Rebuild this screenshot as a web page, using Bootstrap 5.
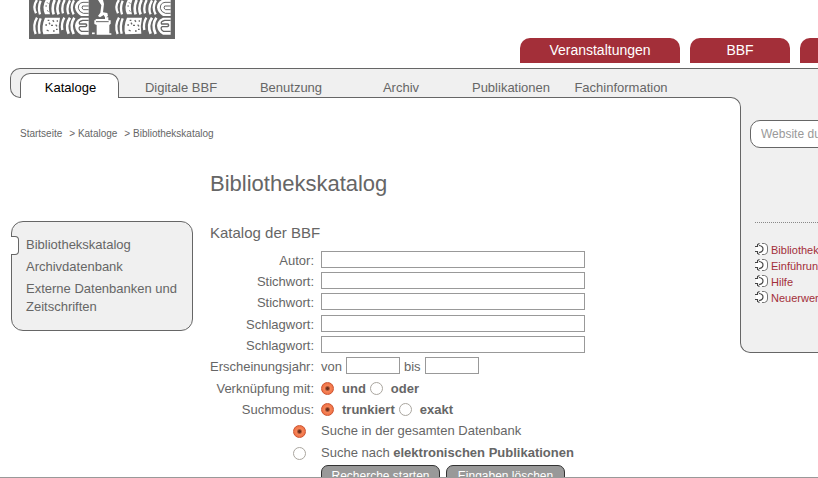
<!DOCTYPE html>
<html lang="de">
<head>
<meta charset="utf-8">
<meta name="viewport" content="width=device-width, initial-scale=1">
<title>Bibliothekskatalog</title>
<link href="https://cdn.jsdelivr.net/npm/bootstrap@5.3.0/dist/css/bootstrap.min.css" rel="stylesheet">
<style>
:root { --ink: #666; --panel: #f0f0f0; --red: #a32f39; }
body { font: 13px/18px "Liberation Sans", Arial, sans-serif; color: var(--ink); background: #fff; }
a { color: inherit; text-decoration: none; }
.page { border-bottom: 1px solid #999; }
.site-head { height: 68px; padding-left: 29px; }
.site-logo { width: 146px; height: 39px; }
.top-tabs { margin-left: 345px; gap: 10px; height: 25px; margin-top: 38px; }
.top-tab { background: var(--red); color: #fff; border-radius: 10px 10px 0 0; width: 100px; font-size: 14px; line-height: 24px; }
.top-tab.wide { width: 160px; }
.main-nav { height: 30px; margin-left: 10px; padding-left: 9px; gap: 10px; background: var(--panel); border: 1px solid var(--ink); border-right: 0; border-radius: 10px 0 0 10px; }
.nav-tab { width: 100px; height: 24px; padding: 5px 0 0 2px; margin-top: 4px; border: 1px solid transparent; border-bottom: 0; }
.nav-tab.current { width: 99px; height: 25px; margin-right: 1px; color: #000; background: #fff; border-color: var(--ink); border-radius: 10px 10px 0 0; z-index: 2; }
.cap { margin: -1px 0 0 20px; padding-right: 77px; background: var(--panel); }
.cap-edge { height: 13px; background: #fff; border: solid var(--ink); border-width: 1px 1px 0 0; border-radius: 0 10px 0 0; }
.crumbs { padding: 15px 0 0 20px; font-size: 10px; gap: 7px; }
.side-nav { width: 182px; margin: 78px 17px 0 11px; padding: 14px; gap: 4px; background: var(--panel); border: 1px solid var(--ink); border-radius: 12px; }
.notch { left: -1px; top: 14px; width: 8px; height: 19px; background: #fff; border: 1px solid var(--ink); border-left: 0; border-radius: 0 4px 4px 0; }
h1 { font-size: 22px; line-height: 26px; margin: 28px 0 0; }
h2 { font-size: 15px; line-height: 18px; margin: 27px 0 7px; }
.search-form { width: 375px; row-gap: 1px; }
.line { height: 21px; }
.line-name { width: 104px; margin-right: 7px; }
.line label, .line .line-name { padding-top: 2px; }
.field { height: 17px; padding: 0 3px; border: 1px solid #999; border-radius: 0; background: #fff; min-width: 0; }
.field.year { width: 54px; }
.dot { appearance: none; width: 13px; height: 13px; margin: 2px 0 0; flex: none; border: 1px solid #aaa69f; border-radius: 50%; background: #fff; }
.dot:checked { border-color: #cc5430; background: radial-gradient(circle, #6c2e1b 0 1px, #f68558 3px, #f2764a 5px); }
.action { min-width: 119px; height: 22px; padding: 0 8px; border: 1px solid #333; border-radius: 7px; background: #999; color: #fff; font-size: 12px; line-height: 18px; }
.actions { padding-top: 3px; gap: 6px; }
.actions .line-name { margin-right: 1px; }
.side-panel { width: 78px; height: 243px; padding: 10px 0 0 9px; background: var(--panel); border: solid var(--ink); border-width: 0 0 1px 1px; border-radius: 0 0 0 10px; }
.site-search { width: 160px; height: 28px; padding: 0 10px; border: 1px solid var(--ink); border-radius: 10px; background: #fff; font-size: 12px; }
.site-search::placeholder { color: #999; opacity: 1; }
.quick-links { margin: 74px 0 0 5px; padding-top: 19px; border-top: 1px dotted #888; color: var(--red); font-size: 11px; line-height: 16px; }
.quick-links svg { width: 13px; height: 12px; margin: 0 3px 2px 0; flex: none; }
</style>
<script src="https://cdn.jsdelivr.net/npm/bootstrap@5.3.0/dist/js/bootstrap.bundle.min.js"></script>
</head>
<body>
<svg class="d-none" aria-hidden="true">
  <symbol id="piece" viewBox="0 0 13 12">
    <path d="M1 1H9Q12.500 1 12.500 5V8Q12.500 11.500 9 11.500H1Z" fill="#fff"/>
    <path d="M7 .5H9.500Q12.500 1 12.500 4V8Q12.500 11 9.500 11.500H7" fill="none" stroke="#777"/>
    <path d="M0 3.500H2.500V1.500L4.500 .5M0 8.500H2.500V10.500L4.500 11.500M4 2.500Q8 3 8 6T4 9.500" fill="none" stroke="#444" stroke-width="1.200"/>
  </symbol>
</svg>
<div class="page vh-100 overflow-hidden">
  <header class="site-head d-flex">
    <svg class="site-logo flex-shrink-0" viewBox="28 0 438 117" role="img" aria-label="BBF">
      <defs>
        <g id="volumes" fill="none" stroke="#fff">
          <path d="M52 53Q38 76 48 102M63 55Q54 77 60 101" stroke-width="7"/>
          <path d="M76 53H121Q115 77 119 101L71 103Q64 80 76 53Z" fill="#fff" stroke="none"/>
          <path d="M84 61h5M99 61l4 4M111 63h4M77 75h5M94 76h6M108 74l4 5M81 90l6 3M100 93h5M88 68l3 5M109 88h5" stroke="#666" stroke-width="4"/>
          <path d="M134 53Q124 70 128 90" stroke-width="7"/>
          <path d="M151 53Q136 75 147 101M164 53Q149 75 162 102" stroke-width="8"/>
          <path d="M207 53H184Q167 60 166 77Q168 96 184 104H207Z" fill="#fff" stroke="none"/>
          <path d="M207 61H189Q175 65 180 72H199Q204 77 197 80H181Q174 86 185 94H207" stroke="#666" stroke-width="4"/>
        </g>
        <g id="volumes-top" fill="none" stroke="#fff">
          <path d="M52 0Q38 18 49 40M63 2Q54 22 61 43" stroke-width="7"/>
          <path d="M78 0H92Q84 21 91 43H76Q66 20 78 0Z" fill="#fff" stroke="none"/>
          <path d="M82 7l4 4M77 18h5M83 31l3 4" stroke="#666" stroke-width="3"/>
          <path d="M105 0Q95 22 102 43M120 0Q108 24 117 43" stroke-width="8"/>
          <path d="M135 0Q124 20 130 40M151 1Q138 24 147 43M163 1Q150 22 162 43" stroke-width="7"/>
          <path d="M207 0H180Q166 8 166 22Q168 39 184 48H207Z" fill="#fff" stroke="none"/>
          <path d="M207 7H190Q175 9 176 25Q178 36 191 40H207M207 18H189Q184 24 191 29H207" stroke="#666" stroke-width="3"/>
        </g>
      </defs>
      <path d="M28 0h438v117H28z" fill="#666"/>
      <use href="#volumes"/><use href="#volumes" x="246"/>
      <use href="#volumes-top"/><use href="#volumes-top" x="246"/>
      <path d="M235 0h15l3 12-3 25 13 2 2 9-8 5-5-8-11 7-6-4 7-10 3-22ZM228 57h28v-5h10v9h7v10l-4 4v25h6v4h-44V75l-7-3V61h4Z" fill="#fff"/>
      <path d="M229 65h38" stroke="#666" stroke-width="3"/>
      <path d="M217 100h8" stroke="#fff" stroke-width="5"/>
    </svg>
    <nav class="top-tabs d-flex flex-shrink-0 text-center" aria-label="Bereiche">
      <a href="#" class="top-tab wide">Veranstaltungen</a>
      <a href="#" class="top-tab">BBF</a>
      <a href="#" class="top-tab" aria-label="Weitere"></a>
    </nav>
  </header>

  <nav class="main-nav d-flex text-center" aria-label="Hauptnavigation">
    <a href="#" class="nav-tab current position-relative" aria-current="page">Kataloge</a>
    <a href="#" class="nav-tab">Digitale BBF</a>
    <a href="#" class="nav-tab">Benutzung</a>
    <a href="#" class="nav-tab">Archiv</a>
    <a href="#" class="nav-tab">Publikationen</a>
    <a href="#" class="nav-tab">Fachinformation</a>
  </nav>
  <div class="cap"><div class="cap-edge"></div></div>

  <div class="d-flex align-items-start">
    <div class="flex-grow-1">
      <nav class="crumbs d-flex" aria-label="Brotkrumen">
        <a href="#">Startseite</a><span>&gt; <a href="#">Kataloge</a></span><span>&gt; <a href="#">Bibliothekskatalog</a></span>
      </nav>
      <div class="d-flex align-items-start">
        <nav class="side-nav d-flex flex-column position-relative flex-shrink-0" aria-label="Kataloge">
          <span class="notch position-absolute"></span>
          <a href="#">Bibliothekskatalog</a>
          <a href="#">Archivdatenbank</a>
          <a href="#">Externe Datenbanken und Zeitschriften</a>
        </nav>
        <main>
          <h1 class="fw-normal">Bibliothekskatalog</h1>
          <h2 class="fw-normal">Katalog der BBF</h2>
          <form class="search-form d-grid">
            <div>
              <div class="line d-flex align-items-center"><label class="line-name text-end" for="author">Autor:</label><input class="field flex-grow-1" id="author" type="text"></div>
              <div class="line d-flex align-items-center"><label class="line-name text-end" for="word1">Stichwort:</label><input class="field flex-grow-1" id="word1" type="text"></div>
              <div class="line d-flex align-items-center"><label class="line-name text-end" for="word2">Stichwort:</label><input class="field flex-grow-1" id="word2" type="text"></div>
            </div>
            <div>
              <div class="line d-flex align-items-center"><label class="line-name text-end" for="subject1">Schlagwort:</label><input class="field flex-grow-1" id="subject1" type="text"></div>
              <div class="line d-flex align-items-center"><label class="line-name text-end" for="subject2">Schlagwort:</label><input class="field flex-grow-1" id="subject2" type="text"></div>
              <div class="line d-flex align-items-center"><span class="line-name text-end">Erscheinungsjahr:</span><label class="me-1" for="from">von</label><input class="field year" id="from" type="text"><label class="mx-1" for="to">bis</label><input class="field year" id="to" type="text"></div>
            </div>
            <div>
              <div class="line d-flex align-items-center"><span class="line-name text-end">Verknüpfung mit:</span><input class="dot" type="radio" name="join" id="and" checked><label class="fw-bold ms-2 me-1" for="and">und</label><input class="dot" type="radio" name="join" id="or"><label class="fw-bold ms-2" for="or">oder</label></div>
              <div class="line d-flex align-items-center"><span class="line-name text-end">Suchmodus:</span><input class="dot" type="radio" name="mode" id="trunc" checked><label class="fw-bold ms-2 me-1" for="trunc">trunkiert</label><input class="dot" type="radio" name="mode" id="exact"><label class="fw-bold ms-2" for="exact">exakt</label></div>
              <div class="line d-flex align-items-center"><span class="line-name d-flex justify-content-end pe-2"><input class="dot" type="radio" name="scope" id="all" checked></span><label for="all">Suche in der gesamten Datenbank</label></div>
            </div>
            <div>
              <div class="line d-flex align-items-center"><span class="line-name d-flex justify-content-end pe-2"><input class="dot" type="radio" name="scope" id="electronic"></span><label for="electronic">Suche nach <b>elektronischen Publikationen</b></label></div>
              <div class="actions d-flex"><span class="line-name flex-shrink-0"></span><button class="action text-nowrap" type="submit">Recherche starten</button><button class="action text-nowrap" type="reset">Eingaben löschen</button></div>
            </div>
          </form>
        </main>
      </div>
    </div>
    <aside class="side-panel flex-shrink-0 overflow-hidden">
      <input class="site-search" type="search" placeholder="Website durchsuchen" aria-label="Website durchsuchen">
      <nav class="quick-links text-nowrap" aria-label="Schnellzugriff">
        <a href="#" class="d-flex align-items-center"><svg><use href="#piece"/></svg>Bibliothek</a>
        <a href="#" class="d-flex align-items-center"><svg><use href="#piece"/></svg>Einführung</a>
        <a href="#" class="d-flex align-items-center"><svg><use href="#piece"/></svg>Hilfe</a>
        <a href="#" class="d-flex align-items-center"><svg><use href="#piece"/></svg>Neuerwerbungen</a>
      </nav>
    </aside>
  </div>
</div>
</body>
</html>
